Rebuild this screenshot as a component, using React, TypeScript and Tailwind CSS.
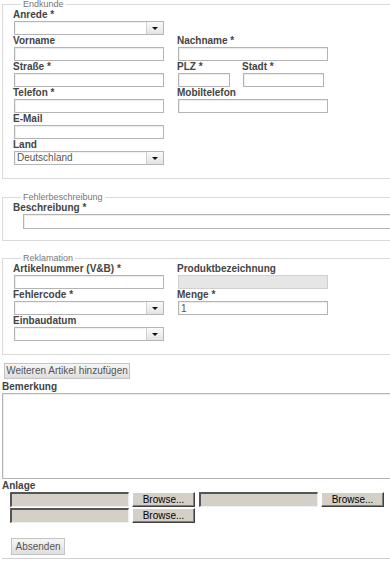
import React from 'react';

const Label = ({ children, className = '' }: { children: React.ReactNode; className?: string }) => (
    <div className={`h-[12px] text-[10px] leading-[12px] font-bold text-[#444] whitespace-nowrap ${className}`}>
        {children}
    </div>
);

const TextInput = ({ w, value, disabled }: { w: string; value?: string; disabled?: boolean }) => (
    <input
        readOnly
        defaultValue={value}
        className={`${w} h-[14px] ml-[1px] block border px-[2px] text-[10px] leading-[12px] text-[#555] outline-none ${
            disabled
                ? 'bg-[#e6e6e6] border-[#d0d0d0]'
                : 'bg-white border-[#b4b4b4] shadow-[inset_1px_1px_1px_rgba(0,0,0,0.08)]'
        }`}
    />
);

const Select = ({ value }: { value?: string }) => (
    <div className="ml-[1px] flex h-[14px] w-[150px] border border-[#b4b4b4] bg-white shadow-[inset_1px_1px_1px_rgba(0,0,0,0.06)]">
        <span className="flex-1 pl-[2px] text-[10px] leading-[12px] text-[#555]">{value}</span>
        <span className="flex w-[17px] items-center justify-center border-l border-[#d0d0d0] bg-gradient-to-b from-[#fafafa] to-[#e4e4e4]">
            <span className="block h-0 w-0 border-x-[3px] border-t-[3px] border-x-transparent border-t-[#111]" />
        </span>
    </div>
);

const Legend = ({ children }: { children: React.ReactNode }) => (
    <legend className="ml-[8px] px-[2px] text-[9px] leading-[9px] text-[#777]">{children}</legend>
);

const FileField = () => (
    <div className="flex h-[15px]">
        <div className="w-[119px] border-t-2 border-l-2 border-b border-r border-t-[#555] border-l-[#555] border-b-[#eee] border-r-[#eee] bg-[#d4d0c8]" />
        <button className="ml-[3px] w-[63px] border border-t-white border-l-white border-b-[#404040] border-r-[#404040] bg-[#d4d0c8] text-[10px] leading-[12px] text-black shadow-[inset_-1px_-1px_0_#808080]">
            Browse...
        </button>
    </div>
);

export default function App() {
    return (
        <div className="w-[390px] h-[561px] overflow-hidden bg-white font-['Liberation_Sans',Arial,sans-serif]">
            <div className="w-[430px] pl-[2px]">
                {/* Endkunde */}
                <fieldset className="border border-[#dadada] pl-[10px] pb-[13px]">
                    <Legend>Endkunde</Legend>
                    <Label>Anrede *</Label>
                    <Select />
                    <div className="flex">
                        <div className="w-[164px]">
                            <Label>Vorname</Label>
                            <TextInput w="w-[150px]" />
                            <Label>Straße *</Label>
                            <TextInput w="w-[150px]" />
                            <Label>Telefon *</Label>
                            <TextInput w="w-[150px]" />
                        </div>
                        <div>
                            <Label>Nachname *</Label>
                            <TextInput w="w-[150px]" />
                            <div className="flex">
                                <div className="w-[65px]">
                                    <Label>PLZ *</Label>
                                    <TextInput w="w-[52px]" />
                                </div>
                                <div>
                                    <Label>Stadt *</Label>
                                    <TextInput w="w-[81px]" />
                                </div>
                            </div>
                            <Label>Mobiltelefon</Label>
                            <TextInput w="w-[150px]" />
                        </div>
                    </div>
                    <Label>E-Mail</Label>
                    <TextInput w="w-[150px]" />
                    <Label>Land</Label>
                    <Select value="Deutschland" />
                </fieldset>

                {/* Fehlerbeschreibung */}
                <fieldset className="mt-[14px] border border-[#dadada] pl-[10px] pb-[11px]">
                    <Legend>Fehlerbeschreibung</Legend>
                    <Label>Beschreibung *</Label>
                    <input
                        readOnly
                        className="ml-[10px] block h-[15px] w-[400px] border border-[#b4b4b4] bg-white shadow-[inset_1px_1px_1px_rgba(0,0,0,0.08)] outline-none"
                    />
                </fieldset>

                {/* Reklamation */}
                <fieldset className="mt-[13px] border border-[#dadada] pl-[10px] pb-[13px]">
                    <Legend>Reklamation</Legend>
                    <div className="flex">
                        <div className="w-[164px]">
                            <Label>Artikelnummer (V&amp;B) *</Label>
                            <TextInput w="w-[150px]" />
                            <Label>Fehlercode *</Label>
                            <Select />
                        </div>
                        <div>
                            <Label>Produktbezeichnung</Label>
                            <TextInput w="w-[150px]" disabled />
                            <Label>Menge *</Label>
                            <TextInput w="w-[150px]" value="1" />
                        </div>
                    </div>
                    <Label>Einbaudatum</Label>
                    <Select />
                </fieldset>

                <button className="mt-[8px] ml-[2px] block h-[16px] w-[126px] border border-[#c4c4c4] bg-gradient-to-b from-[#f6f6f6] to-[#dedede] text-[10px] leading-[12px] text-[#555]">
                    Weiteren Artikel hinzufügen
                </button>

                <Label className="mt-[2px]">Bemerkung</Label>
                <textarea
                    readOnly
                    className="block h-[86px] w-[420px] resize-none border border-[#b4b4b4] bg-white shadow-[inset_1px_1px_1px_rgba(0,0,0,0.08)] outline-none"
                />

                <Label className="mt-[1px] h-[10px] leading-[10px]">Anlage</Label>
                <div className="pl-[8px]">
                    <div className="flex gap-[4px]">
                        <FileField />
                        <FileField />
                    </div>
                    <div className="mt-[1px]">
                        <FileField />
                    </div>
                </div>

                <button className="mt-[15px] ml-[9px] block h-[17px] w-[54px] border border-[#c4c4c4] bg-gradient-to-b from-[#f6f6f6] to-[#dedede] text-[10px] leading-[12px] text-[#555]">
                    Absenden
                </button>
                <div className="mt-[3px] border-t border-[#cfcfcf]" />
            </div>
        </div>
    );
}
